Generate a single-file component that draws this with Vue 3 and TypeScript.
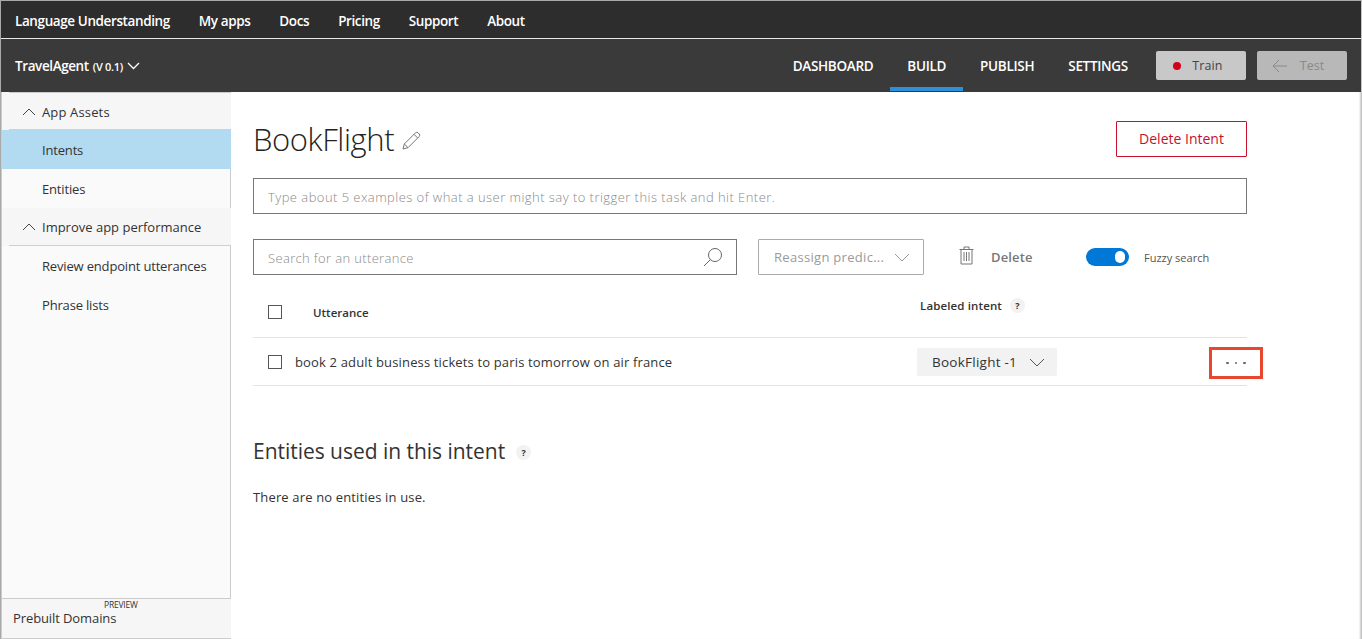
<script setup lang="ts">
const topLinks = ['Language Understanding', 'My apps', 'Docs', 'Pricing', 'Support', 'About'];
const tabs = ['DASHBOARD', 'BUILD', 'PUBLISH', 'SETTINGS'];
</script>

<template>
  <div class="page">
    <nav class="top-bar">
      <a v-for="link in topLinks" :key="link" class="top-link">{{ link }}</a>
    </nav>
    <header class="app-bar">
      <div class="app-name">
        <span>TravelAgent</span>
        <small>(V 0.1)</small>
        <svg class="chev" width="13" height="8" viewBox="0 0 13 8"><path d="M1 1l5.500 5.500L12 1" /></svg>
      </div>
      <div class="tabs">
        <a v-for="tab in tabs" :key="tab" class="tab" :class="{ active: tab === 'BUILD' }">{{ tab }}</a>
      </div>
      <button class="bar-btn train"><span class="dot"></span>Train</button>
      <button class="bar-btn test">
        <svg width="15" height="14" viewBox="0 0 15 14"><path d="M7 1L1 7l6 6M1 7h14" /></svg>
        Test
      </button>
    </header>
    <div class="body">
      <aside class="side">
        <div class="side-head first">
          <svg width="14" height="8" viewBox="0 0 14 8"><path d="M1 7l6-6 6 6" /></svg>
          <span>App Assets</span>
        </div>
        <a class="side-item selected">Intents</a>
        <a class="side-item">Entities</a>
        <div class="side-head">
          <svg width="14" height="8" viewBox="0 0 14 8"><path d="M1 7l6-6 6 6" /></svg>
          <span>Improve app performance</span>
        </div>
        <a class="side-item">Review endpoint utterances</a>
        <a class="side-item">Phrase lists</a>
        <div class="side-foot">
          <span class="preview">PREVIEW</span>
          Prebuilt Domains
        </div>
      </aside>
      <main class="main">
        <div class="title-row">
          <h1>BookFlight</h1>
          <svg class="pencil" width="19" height="19" viewBox="0 0 19 19">
            <path d="M1 18l1.300-5L13.500 1.800a1.800 1.800 0 0 1 2.500 0l1.200 1.200a1.800 1.800 0 0 1 0 2.500L6 16.700zM2.300 13L6 16.700M12 3.300L15.700 7" />
          </svg>
          <button class="delete-intent">Delete Intent</button>
        </div>
        <div class="field example">Type about 5 examples of what a user might say to trigger this task and hit Enter.</div>
        <div class="tools">
          <div class="field search">
            <span>Search for an utterance</span>
            <svg width="20" height="20" viewBox="0 0 20 20"><circle cx="12" cy="8" r="6.500" /><path d="M7.500 12.500L1 19" /></svg>
          </div>
          <div class="reassign">
            <span>Reassign predic...</span>
            <svg width="16" height="9" viewBox="0 0 16 9"><path d="M1 1l7 7 7-7" /></svg>
          </div>
          <div class="trash">
            <svg width="15" height="19" viewBox="0 0 15 19">
              <path d="M.5 3.500h14M2 3.500V18h11V3.500M5 3.500V1h5v2.500M5 6v9M7.500 6v9M10 6v9" />
            </svg>
            <span>Delete</span>
          </div>
          <div class="fuzzy">
            <span class="toggle"><i></i></span>
            <span>Fuzzy search</span>
          </div>
        </div>
        <div class="table-head">
          <span class="check"></span>
          <span class="col-utt">Utterance</span>
          <span class="col-int">Labeled intent <b class="help">?</b></span>
        </div>
        <div class="row">
          <span class="check"></span>
          <span class="utt">book 2 adult business tickets to paris tomorrow on air france</span>
          <span class="pill">
            <span>BookFlight -1</span>
            <svg width="16" height="9" viewBox="0 0 16 9"><path d="M1 1l7 7 7-7" /></svg>
          </span>
          <span class="more"><i></i><i></i><i></i></span>
        </div>
        <h2>Entities used in this intent <b class="help">?</b></h2>
        <p class="none">There are no entities in use.</p>
      </main>
    </div>
  </div>
</template>

<style scoped>
.page {
  height: 639px;
  box-sizing: border-box;
  border-top: 1px solid #a9a9a9;
  border-left: 1px solid #a9a9a9;
  border-right: 1px solid #c4c4c4;
  display: flex;
  flex-direction: column;
  font-family: "Open Sans", "Noto Sans", sans-serif;
  color: #333;
  overflow: hidden;
}

svg {
  fill: none;
  stroke: currentColor;
  stroke-width: 1;
  flex-shrink: 0;
}

.top-bar {
  height: 35px;
  background: #2d2d2d;
  border-bottom: 1px solid #e8e8e8;
  display: flex;
  align-items: center;
  gap: 29px;
  padding: 2px 0 0 14px;
  flex-shrink: 0;
}

.top-link {
  color: #fff;
  font-size: 13.500px;
  font-weight: 600;
  letter-spacing: -0.4px;
}

.app-bar {
  height: 53px;
  background: #3a3a3a;
  display: flex;
  align-items: center;
  padding: 0 14px;
  flex-shrink: 0;
}

.app-name {
  color: #fff;
  font-size: 13.500px;
  font-weight: 600;
  letter-spacing: -0.4px;
  display: flex;
  align-items: center;
  gap: 4px;
  white-space: pre;
}

.app-name small {
  font-size: 11px;
  letter-spacing: -0.3px;
  margin-top: 1px;
}

.chev {
  color: #fff;
  stroke-width: 1.300;
}

.tabs {
  margin-left: auto;
  display: flex;
  align-self: stretch;
  margin-right: 11px;
}

.tab {
  color: #fff;
  font-size: 13.500px;
  font-weight: 600;
  letter-spacing: -0.3px;
  padding: 3px 17px 0;
  display: flex;
  align-items: center;
  height: 50px;
  box-sizing: border-box;
}

.tab.active {
  height: 52px;
  border-bottom: 4px solid #2f8fd8;
  padding-top: 5px;
}

.bar-btn {
  height: 29px;
  width: 90px;
  border: 0;
  border-radius: 2px;
  font-family: inherit;
  font-size: 12.500px;
  font-weight: 500;
  display: flex;
  align-items: center;
  justify-content: center;
  background: #c8c8c8;
  color: #444;
  padding: 0;
}

.train {
  gap: 11px;
  padding-right: 6px;
  letter-spacing: 0.1px;
}

.dot {
  width: 8px;
  height: 8px;
  border-radius: 50%;
  background: #d0021b;
}

.test {
  margin-left: 11px;
  background: #b8b8b8;
  color: #8a8a8a;
  gap: 13px;
  padding-right: 8px;
}

.body {
  flex: 1;
  display: flex;
  min-height: 0;
}

.side {
  width: 230px;
  flex-shrink: 0;
  background: #fafafa;
  border-left: 1px solid #ccc;
  border-right: 1px solid #ccc;
  border-bottom: 1px solid #ccc;
  box-sizing: border-box;
  display: flex;
  flex-direction: column;
  font-size: 13px;
  color: #333;
}

.side-head {
  height: 38px;
  margin-right: -1px;
  padding: 0 0 1px 20px;
  background: linear-gradient(#d0d0d0, #d0d0d0) 7px 100% / 100% 1px no-repeat, #f6f6f6;
  display: flex;
  align-items: center;
  gap: 6px;
  font-weight: 500;
  color: #333;
  box-sizing: border-box;
  font-size: 13px;
}

.side-head.first {
  padding: 1px 0 0 20px;
  background:
    linear-gradient(#d0d0d0, #d0d0d0) 7px 100% / 100% 1px no-repeat,
    linear-gradient(#ccc, #ccc) 7px 0 / 100% 1px no-repeat,
    #f6f6f6;
}

.side-head.first span {
  letter-spacing: 0.15px;
}

.side-head svg {
  color: #444;
}

.side-item {
  height: 39px;
  padding: 1px 0 0 40px;
  display: flex;
  align-items: center;
  box-sizing: border-box;
  letter-spacing: -0.17px;
}

.side-item.selected {
  background: #b2dbf2;
  margin-right: -1px;
}

.side-foot {
  margin-top: auto;
  margin-right: -1px;
  height: 40px;
  background: #f6f6f6;
  border-top: 1px solid #ccc;
  box-sizing: border-box;
  padding: 10px 0 0 11px;
  position: relative;
  font-size: 13px;
  letter-spacing: -0.1px;
}

.preview {
  position: absolute;
  left: 102px;
  top: 0;
  font-size: 8.500px;
  letter-spacing: -0.2px;
}

.main {
  flex: 1;
  padding-left: 22px;
  padding-right: 114px;
  position: relative;
  box-shadow: inset -2px 0 2px -1px #ccc;
}

.title-row {
  display: flex;
  align-items: center;
  height: 86px;
  padding-top: 7px;
  box-sizing: border-box;
}

h1 {
  margin: 0;
  font-size: 31px;
  font-weight: 300;
  letter-spacing: -0.4px;
  color: #222;
}

.pencil {
  margin-left: 8px;
  margin-top: 3px;
  color: #777;
}

.delete-intent {
  margin-left: auto;
  width: 131px;
  height: 36px;
  border: 1px solid #c8102e;
  border-radius: 1px;
  background: #fff;
  color: #c8102e;
  font-family: inherit;
  font-size: 14px;
  padding: 0;
}

.field {
  box-sizing: border-box;
  height: 36px;
  border: 1px solid #777;
  padding: 1px 0 0 14px;
  display: flex;
  align-items: center;
  font-size: 13px;
  color: #8a8a8a;
  font-weight: 300;
}

.example {
  letter-spacing: 0.45px;
}

.tools {
  display: flex;
  align-items: center;
  margin-top: 25px;
  height: 36px;
}

.search {
  width: 484px;
  justify-content: space-between;
  padding-right: 13px;
  letter-spacing: 0.35px;
}

.search svg {
  color: #666;
  margin-top: -2px;
}

.reassign {
  margin-left: 21px;
  box-sizing: border-box;
  width: 166px;
  height: 36px;
  border: 1px solid #aaa;
  border-radius: 1px;
  display: flex;
  align-items: center;
  justify-content: space-between;
  padding: 0 13px 0 15px;
  font-size: 13px;
  letter-spacing: 0.3px;
  color: #9a9a9a;
}

.trash {
  margin-left: 35px;
  display: flex;
  align-items: center;
  gap: 17px;
  color: #777;
  font-size: 13px;
  font-weight: 600;
  letter-spacing: 0.15px;
  width: 127px;
}

.trash svg {
  margin-top: -3px;
}

.fuzzy {
  display: flex;
  align-items: center;
  gap: 15px;
  font-size: 11px;
  color: #555;
}

.toggle {
  width: 43px;
  height: 18px;
  border-radius: 9px;
  background: #0078d7;
  position: relative;
  flex-shrink: 0;
  box-sizing: border-box;
}

.toggle i {
  position: absolute;
  right: 4px;
  top: 3px;
  width: 10px;
  height: 12px;
  border-radius: 5px;
  background: #fff;
}

.check {
  width: 12px;
  height: 12px;
  border: 1px solid #555;
  flex-shrink: 0;
}

.table-head {
  height: 62px;
  border-bottom: 1px solid #e4e4e4;
  padding-left: 15px;
  display: flex;
  align-items: center;
  font-size: 11.500px;
  font-weight: 600;
  color: #333;
  position: relative;
}

.table-head > .check,
.col-utt {
  position: relative;
  top: 6px;
}

.col-utt {
  margin-left: 31px;
}

.col-int {
  position: absolute;
  left: 667px;
  top: 23px;
  display: flex;
  align-items: center;
  gap: 8px;
  letter-spacing: 0.13px;
}

.help {
  width: 15px;
  height: 15px;
  border-radius: 50%;
  background: #f2f2f2;
  display: inline-flex;
  align-items: center;
  justify-content: center;
  font-size: 9px;
  font-weight: 700;
  color: #333;
}

.row {
  height: 47px;
  border-bottom: 1px solid #e4e4e4;
  padding-left: 15px;
  display: flex;
  align-items: center;
  position: relative;
  font-size: 13px;
  color: #333;
}

.utt {
  margin-left: 13px;
  letter-spacing: 0.15px;
}

.pill {
  position: absolute;
  left: 664px;
  top: 10px;
  width: 140px;
  height: 28px;
  box-sizing: border-box;
  background: #f2f2f2;
  border-radius: 1px;
  display: flex;
  align-items: center;
  gap: 12px;
  padding-left: 15px;
  font-size: 13.500px;
  letter-spacing: 0.25px;
}

.pill svg {
  color: #555;
}

.more {
  position: absolute;
  left: 956px;
  top: 9px;
  width: 54px;
  height: 32px;
  box-sizing: border-box;
  border: 3px solid #e8472f;
  display: flex;
  align-items: center;
  justify-content: center;
  gap: 6px;
}

.more i {
  width: 2.500px;
  height: 2.500px;
  border-radius: 50%;
  background: #666;
}

h2 {
  margin: 50px 0 0;
  font-size: 21px;
  line-height: 30px;
  font-weight: 400;
  color: #333;
  display: flex;
  align-items: center;
  gap: 11px;
  letter-spacing: -0.03px;
}

h2 .help {
  margin-top: 3px;
}

.none {
  margin: 22px 0 0;
  font-size: 13px;
  letter-spacing: 0.15px;
  color: #333;
}
</style>
